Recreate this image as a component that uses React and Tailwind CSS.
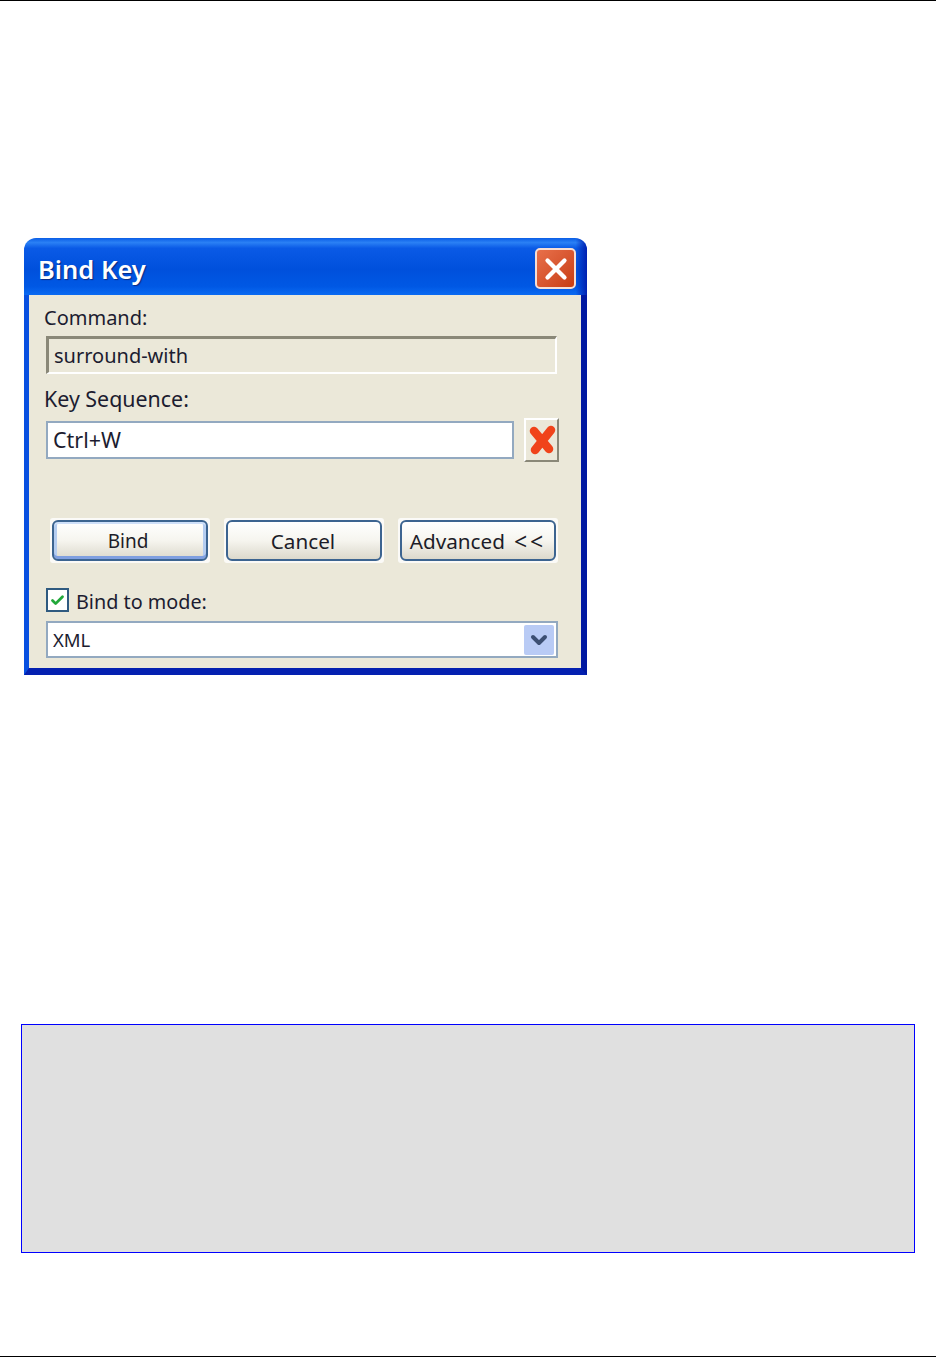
import React from 'react';
import { X, Check, ChevronDown } from 'lucide-react';

const font = "font-['Noto_Sans','Liberation_Sans',sans-serif]";

const XpButton = ({ children, active }) => (
  <div className="w-[160px] h-[45px] bg-white/80 rounded-[3px] p-[2px]">
    <div className={`w-full h-full pt-[2px] rounded-[6px] border-2 border-[#3c6490] flex items-center justify-center text-[#1c1c28] bg-gradient-to-b from-white via-[#f6f5ef] to-[#dcd9cc] ${active ? 'shadow-[inset_0_2px_0_#cfe0f9,inset_0_-3px_0_#7f9fe0,inset_3px_0_0_#b5cdf0,inset_-3px_0_0_#b5cdf0]' : ''}`}>
      {children}
    </div>
  </div>
);

export default function App() {
  return (
    <div className={`w-[936px] h-[1357px] bg-white flex flex-col border-y border-black ${font}`}>
      {/* dialog */}
      <div className="mt-[237px] ml-[24px] w-[563px] h-[437px] flex flex-col rounded-t-[12px] overflow-hidden">
        <div className="h-[57px] shrink-0 flex items-center justify-between pl-[14px] pr-[11px] bg-[linear-gradient(90deg,transparent_98%,#0020b0_100%),linear-gradient(180deg,#0a5ee6_0%,#2a80f5_8%,#0a5ae6_18%,#0050dc_55%,#0058e4_85%,#0a6af2_100%)]">
          <span className="mt-[6px] text-[25.5px] font-semibold text-white [text-shadow:1px_1px_1px_#0a2a80]">Bind Key</span>
          <div className="mt-[4px] w-[41px] h-[41px] rounded-[5px] border-2 border-[#f7ded4] bg-gradient-to-br from-[#e8704a] to-[#c83c10] flex items-center justify-center">
            <X size={34} strokeWidth={3} color="white" className="shrink-0" />
          </div>
        </div>
        <div className="flex-1 min-h-0 border-l-[5px] border-l-[#0850e0] border-r-[6px] border-r-[#0018a0] border-b-[7px] border-b-[#0420b0]">
          <div className="h-full bg-[#ebe8d9] pl-[15px] pr-[22px] flex flex-col text-[#1c1c30]">
            <div className="h-[41px] pt-[4px] flex items-center text-[20px]">Command:</div>
            <div className="h-[38px] mx-[2px] shrink-0 border-t-[3px] border-l-[3px] border-b-2 border-r-2 border-t-[#8a8878] border-l-[#8a8878] border-b-white border-r-white pl-[5px] flex items-center leading-none text-[20px]">
              surround-with
            </div>
            <div className="h-[44px] pt-[6px] flex items-center text-[21.4px]">Key Sequence:</div>
            <div className="flex items-center justify-between h-[44px] shrink-0">
              <div className="w-[468px] ml-[2px] h-[38px] bg-white border-2 border-[#93a9c0] pl-[5px] flex items-center text-[21.5px]">Ctrl+W</div>
              <div className="w-[35px] h-[44px] border-2 border-t-white border-l-white border-r-[#8a8878] border-b-[#8a8878] flex items-center justify-center">
                <svg width="28" height="32" viewBox="0 0 28 32">
                  <path d="M6 7 L21 25 M23 6 L7 26" fill="none" stroke="#f0431a" strokeWidth="8.5" strokeLinecap="round" />
                </svg>
              </div>
            </div>
            <div className="flex gap-[14px] pl-[6px] mt-[56px] text-[20.7px]">
              <XpButton active><span className="text-[19px] pr-[4px]">Bind</span></XpButton>
              <XpButton><span className="pr-[2px]">Cancel</span></XpButton>
              <XpButton><span className="pr-[1px]">Advanced</span><span className="ml-[8px] text-[23px] tracking-[3px]">&lt;&lt;</span></XpButton>
            </div>
            <div className="flex items-center gap-[7px] mt-[22px] h-[30px] ml-[2px] text-[19.8px]">
              <div className="w-[23px] h-[24px] border-2 border-[#2f5a80] bg-white flex items-center justify-center">
                <Check size={15} strokeWidth={4.5} color="#22a83a" />
              </div>
              <span className="mt-[3px]">Bind to mode:</span>
            </div>
            <div className="h-[37px] shrink-0 mt-[6px] ml-[2px] mr-[1px] bg-white border-2 border-[#93a9c0] pl-[5px] pr-[2px] flex items-center justify-between">
              <span className="text-[18.5px]">XML</span>
              <div className="w-[30px] h-[30px] rounded-[2px] bg-[#b9cbf5] flex items-center justify-center">
                <ChevronDown size={24} strokeWidth={4} color="#3c4f73" />
              </div>
            </div>
          </div>
        </div>
      </div>

      {/* code listing placeholder */}
      <div className="mt-[349px] ml-[21px] w-[894px] h-[229px] bg-[#e0e0e0] border border-[#0000ff]" />
    </div>
  );
}
